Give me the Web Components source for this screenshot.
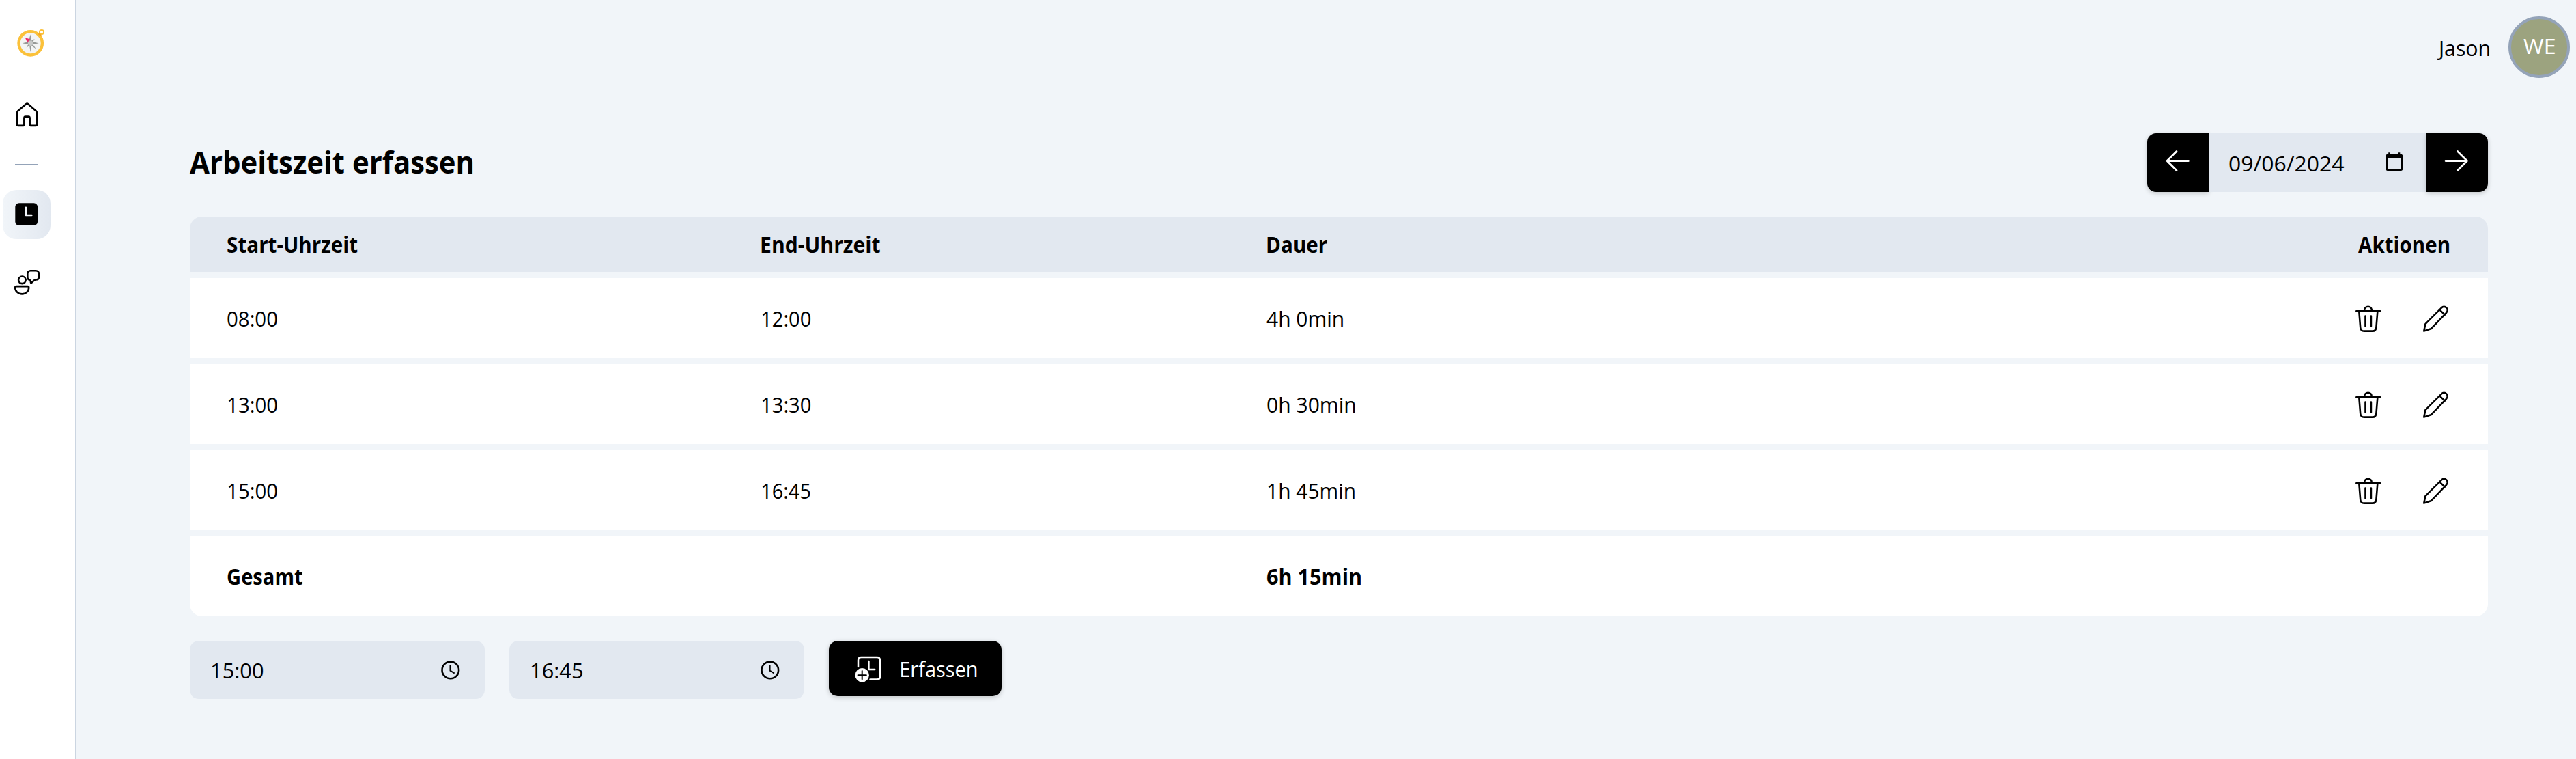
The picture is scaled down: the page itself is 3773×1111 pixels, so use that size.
<!DOCTYPE html>
<html lang="de">
<head>
<meta charset="utf-8">
<title>Arbeitszeit erfassen</title>
<style>
html,body{margin:0;height:100%}
body{font-family:"Open Sans","Noto Sans",sans-serif;font-size:31.5px;color:#000;background:#f1f5f9;overflow:hidden}
</style>
</head>
<body>
<app-shell>
  <side-nav slot="nav"></side-nav>
  <user-bar slot="user" name="Jason" initials="WE"></user-bar>
  <page-head slot="page" heading="Arbeitszeit erfassen"><date-stepper value="09/06/2024"></date-stepper></page-head>
  <time-table slot="page"></time-table>
  <entry-form slot="page"></entry-form>
</app-shell>
<script>
const ICONS = {
  compass: [42,42,`<circle cx="20.7" cy="21.3" r="17.2" fill="#f3f4f4" stroke="#fbc13a" stroke-width="4.4"/><circle cx="37" cy="5" r="3.1" fill="none" stroke="#fbc13a" stroke-width="2"/><path d="M33 5.5l4 4-2 1-3-2z" fill="#f5a623"/><path d="M20.7 8.500l1.500 9 4.500-2.500-2.500 4.300 8.500 2-8.500 1.700 4.500 6.500-6.500-4.500-1.500 9-1.500-9-4.500 2.500 2.500-4.500-8.500-1.700 8.500-2z" fill="#969997"/><path d="M12.700 13l7.500 2.500-4 5z" fill="#ee2b6c"/><circle cx="20.7" cy="21.300" r="3.800" fill="#c6c8c7"/>`],
  home: [36,36,`<path d="M2.200 14.500v18c0 .8.500 1.300 1.300 1.300h7.600c.8 0 1.300-.5 1.300-1.300v-9.800c0-1.300.8-2.100 2.100-2.100h4c1.300 0 2.100.8 2.100 2.100v9.800c0 .8.500 1.300 1.300 1.300h7.600c.8 0 1.300-.5 1.300-1.300v-18c0-1-.4-1.600-1.100-2.200L18.200 2.200c-1-.8-2.100-.8-3.100 0L3.300 12.300c-.7.6-1.100 1.200-1.100 2.200z" fill="none" stroke="#000" stroke-width="2.700" stroke-linejoin="round"/>`],
  clockSolid: [34,34,`<rect x=".3" y=".3" width="32.800" height="32.600" rx="5.500"/><path d="M15.900 6.800v11.200h8.400" fill="none" stroke="#f1f5f9" stroke-width="2.600" stroke-linecap="round" stroke-linejoin="round"/>`],
  people: [38,38,`<g fill="none" stroke="#000" stroke-width="2.600" stroke-linejoin="round"><circle cx="11.400" cy="14.800" r="5.300"/><path d="M3 24.100h16.400c1.100 0 1.800.7 1.800 1.800 0 5.400-4.200 9.500-10 9.500S1.200 31.300 1.200 25.900c0-1.100.7-1.800 1.800-1.800z"/><path d="M23.600 1.300h8c2.500 0 4.300 1.800 4.300 4.300v5.100c0 2.300-1.700 3.700-4.600 3.800-2.200.2-2.900 1.200-4.100 2.500l-2.200 2.100c-.4.300-.8.100-.9-.4l-.5-3.300c-2.500-.7-4.300-1.900-4.300-4.700V5.600c0-2.500 1.800-4.300 4.300-4.300z"/></g>`],
  left: [36,32,`<path d="M16 1.500L2 15.500l14 14M2 15.500h31.500" fill="none" stroke="#fff" stroke-width="2.800" stroke-linecap="round" stroke-linejoin="round"/>`],
  right: [36,32,`<path d="M18.500 1.500l14 14-14 14M32.500 15.500H1" fill="none" stroke="#fff" stroke-width="2.800" stroke-linecap="round" stroke-linejoin="round"/>`],
  calendar: [26,28,`<path d="M3 2.800h1.200V.3h2.500v2.500h12.100V.3h2.500v2.500h1.500c1.500 0 2.400 1 2.400 2.400v19.400c0 1.500-1 2.400-2.400 2.400H3C1.500 27 .5 26.100.5 24.600V5.200C.5 3.800 1.500 2.800 3 2.800zM3 9v15.600h19.600V9z" fill-rule="evenodd"/>`],
  clock: [28,28,`<circle cx="13.800" cy="13.900" r="12.300" fill="none" stroke="#000" stroke-width="2.600"/><path d="M13.500 7.100v7.500l6.200 3.900" fill="none" stroke="#000" stroke-width="2"/>`],
  trash: [38,40,`<g fill="none" stroke="#000" stroke-width="2.600" stroke-linecap="round" stroke-linejoin="round"><path d="M1.300 8.300h35M13.200 8v-1.100c0-3 2.300-5.200 5.300-5.200s5.300 2.200 5.300 5.200V8M5.300 9l1.900 23.500c.3 3.100 2.200 5.100 5.400 5.100h12.400c3.200 0 5.100-2 5.400-5.100L32.300 9M14.500 15.600v14.900M22.900 15.600v14.900"/></g>`],
  pencil: [38,40,`<g fill="none" stroke="#000" stroke-width="2.600" stroke-linecap="round" stroke-linejoin="round"><path d="M1.300 37.500l2.100-10.400L26.900 3.600c2.200-2.300 5.200-2.300 7.300-.2s2.100 5.200-.2 7.400L11.500 34.300z"/><path d="M24.200 6.400l7.600 7.200"/></g>`],
  addClock: [40,40,`<g fill="none" stroke="#fff" stroke-width="2.500" stroke-linecap="round" stroke-linejoin="round"><path d="M5 16V6.500C5 3.500 6.600 2 9.500 2H32.500C35.500 2 37 3.500 37 6.500V30.200C37 33.200 35.500 34.500 32.500 34.500H22.500M20.400 8v12h8.800"/></g><circle cx="10.700" cy="28.200" r="11.600" fill="#000"/><circle cx="10.700" cy="28.200" r="10.200" fill="#fff"/><path d="M10.700 22.100v12.200M4.600 28.200h12.200" stroke="#000" stroke-width="2" stroke-linecap="round"/>`]
};

class Base extends HTMLElement {
  connectedCallback() {
    if (this.shadowRoot) return;
    this.attachShadow({ mode: 'open' }).innerHTML = this.render();
    if (this.ready) this.ready();
  }
}

// Label whose box is exactly as wide as its visible letters.
class FitText extends Base {
  render() {
    return `<style>:host{display:block;flex:none;white-space:nowrap;line-height:1.362}span{display:inline-block;transform-origin:0 50%}</style><span><slot></slot></span>`;
  }
  ready() {
    const target = +this.getAttribute('w');
    const cs = getComputedStyle(this);
    const ctx = document.createElement('canvas').getContext('2d');
    ctx.font = `${cs.fontWeight} ${cs.fontSize} ${cs.fontFamily}`;
    const m = ctx.measureText(this.textContent);
    const k = target / (m.actualBoundingBoxRight + m.actualBoundingBoxLeft);
    this.style.width = target + 'px';
    this.shadowRoot.querySelector('span').style.transform =
      `translate(${m.actualBoundingBoxLeft * k}px,1px) scaleX(${k})`;
  }
}

class UiIcon extends Base {
  render() {
    const [w, h, body] = ICONS[this.getAttribute('name')];
    return `<style>:host{display:block;flex:none;width:${w}px;height:${h}px}svg{display:block;overflow:visible}</style><svg width="${w}" height="${h}" viewBox="0 0 ${w} ${h}">${body}</svg>`;
  }
}

class AppShell extends Base {
  render() {
    return `<style>
      :host{display:flex;height:1111px;background:#f1f5f9}
      main{flex:1;display:flex;flex-direction:column}
      .page{display:flex;flex-direction:column;padding:81px 129px 0 166px}
    </style><slot name="nav"></slot><main><slot name="user"></slot><div class="page"><slot name="page"></slot></div></main>`;
  }
}

class SideNav extends Base {
  render() {
    return `<style>
      :host{display:block;box-sizing:border-box;width:112px;border-right:2px solid #cbd5e1;background:#fff}
      nav{display:flex;flex-direction:column;align-items:flex-start;padding:42px 0 0 4px}
      .logo{margin-left:20px}.home{margin:66px 0 0 19px}
      hr{width:34px;height:2px;margin:54px 0 36px 18px;border:0;background:#94a3b8}
      .active{display:flex;align-items:center;justify-content:center;width:70px;height:72px;border-radius:20px;background:linear-gradient(90deg,#f1f5f9,#e2e8f0)}
      .people{margin:45px 0 0 17px}
    </style><nav><ui-icon class="logo" name="compass"></ui-icon><ui-icon class="home" name="home"></ui-icon><hr><div class="active"><ui-icon name="clockSolid"></ui-icon></div><ui-icon class="people" name="people"></ui-icon></nav>`;
  }
}

class UserBar extends Base {
  render() {
    return `<style>
      :host{display:flex;justify-content:flex-end;align-items:center;gap:28px;padding:24px 9px 0 0}
      .avatar{box-sizing:border-box;width:90px;height:90px;border:4px solid #94a3b8;border-radius:50%;background:#9ca37f;color:#fff;display:flex;align-items:center;justify-content:center;padding-bottom:5px}
    </style><fit-text w="77">${this.getAttribute('name')}</fit-text><div class="avatar"><fit-text w="46">${this.getAttribute('initials')}</fit-text></div>`;
  }
}

class PageHead extends Base {
  render() {
    return `<style>
      :host{display:flex;justify-content:space-between;align-items:center;height:86px;margin-bottom:36px}
      h1{margin:0;padding-bottom:3px;font-size:44.5px;font-weight:700}
    </style><h1><fit-text w="414">${this.getAttribute('heading')}</fit-text></h1><slot></slot>`;
  }
}

class DateStepper extends Base {
  render() {
    return `<style>
      :host{display:flex;height:86px}
      button{display:flex;align-items:center;justify-content:center;box-sizing:border-box;width:90px;padding:0 0 5px;border:0;background:#000;box-shadow:0 2px 7px rgba(0,0,0,.2)}
      .prev{border-radius:13px 0 0 13px}.next{border-radius:0 13px 13px 0}
      .field{display:flex;align-items:center;justify-content:space-between;box-sizing:border-box;width:319px;padding:0 34px 0 30px;background:#e2e8f0}
      ui-icon{margin-bottom:2px}button ui-icon{margin:0}
    </style><button class="prev"><ui-icon name="left"></ui-icon></button><div class="field"><fit-text w="168.5">${this.getAttribute('value')}</fit-text><ui-icon name="calendar"></ui-icon></div><button class="next"><ui-icon name="right"></ui-icon></button>`;
  }
}

class TableRow extends Base {
  render() {
    return `<style>
      :host{display:grid;grid-template-columns:783px 740px 1fr auto;align-items:center;height:117px;box-sizing:border-box;padding:0 55px 0 54px;background:#fff}
      :host([kind=head]){height:81px;border-radius:18px 18px 0 0;background:#e2e8f0;font-weight:700}
      :host([kind=total]){border-radius:0 0 18px 18px;font-weight:700}
    </style><slot></slot>`;
  }
}

class RowActions extends Base {
  render() {
    return `<style>:host{display:flex;gap:61px;margin:2px 2px 0 0}</style><ui-icon name="trash"></ui-icon><ui-icon name="pencil"></ui-icon>`;
  }
}

class TimeTable extends Base {
  render() {
    const rows = [
      [['08:00', 73, 1], ['12:00', 71.5, 1], ['4h 0min', 112, 0]],
      [['13:00', 72, 2], ['13:30', 71.5, 1], ['0h 30min', 128.5, 1]],
      [['15:00', 72, 2], ['16:45', 71, 1], ['1h 45min', 127, 2]]
    ];
    return `<style>:host{display:flex;flex-direction:column;gap:9px}</style>
      <table-row kind="head"><fit-text w="190.5" style="margin-left:.5px">Start-Uhrzeit</fit-text><fit-text w="174">End-Uhrzeit</fit-text><fit-text w="88" style="margin-left:1px">Dauer</fit-text><fit-text w="133.5" style="margin-right:1.5px">Aktionen</fit-text></table-row>
      ${rows.map(r => `<table-row>${r.map(([t, w, x]) => `<fit-text w="${w}" style="margin-left:${x}px">${t}</fit-text>`).join('')}<row-actions></row-actions></table-row>`).join('')}
      <table-row kind="total"><fit-text w="110" style="margin-left:.5px">Gesamt</fit-text><span></span><fit-text w="137.5" style="margin-left:1px">6h 15min</fit-text></table-row>`;
  }
}

class TimeField extends Base {
  render() {
    return `<style>:host{display:flex;align-items:center;justify-content:space-between;box-sizing:border-box;width:432px;height:85px;padding:0 36px 0 32px;border-radius:13px;background:#e2e8f0}</style><fit-text w="75.5">${this.getAttribute('value')}</fit-text><ui-icon name="clock"></ui-icon>`;
  }
}

class EntryForm extends Base {
  render() {
    return `<style>
      :host{display:flex;align-items:flex-start;gap:36px;margin-top:36px}
      button{display:flex;align-items:center;box-sizing:border-box;gap:28px;width:253px;height:81px;padding:0 0 0 38px;border:0;border-radius:13px;background:#000;color:#fff;font:inherit;box-shadow:0 2px 7px rgba(0,0,0,.2)}
      ui-icon{margin-top:2px}
    </style><time-field value="15:00"></time-field><time-field value="16:45"></time-field><button><ui-icon name="addClock"></ui-icon><fit-text w="110.5">Erfassen</fit-text></button>`;
  }
}

for (const [n, c] of Object.entries({
  'fit-text': FitText, 'ui-icon': UiIcon, 'app-shell': AppShell, 'side-nav': SideNav, 'user-bar': UserBar,
  'page-head': PageHead, 'date-stepper': DateStepper, 'table-row': TableRow, 'row-actions': RowActions,
  'time-table': TimeTable, 'time-field': TimeField, 'entry-form': EntryForm
})) customElements.define(n, c);
</script>
</body>
</html>
